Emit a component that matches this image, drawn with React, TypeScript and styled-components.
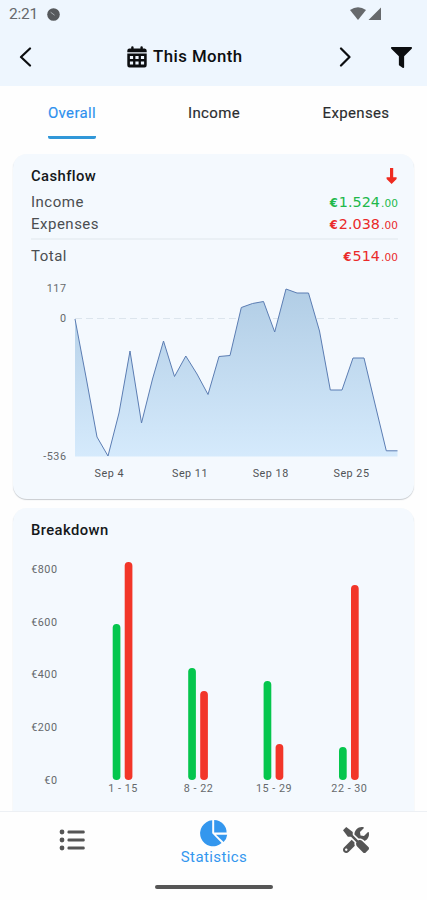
import React from "react";
import styled, { createGlobalStyle } from "styled-components";
import { FaFilter, FaTools } from "react-icons/fa";

const GlobalStyle = createGlobalStyle`
  * { box-sizing: border-box; }
  body { margin: 0; background: #fff; font-family: Roboto, "Liberation Sans", sans-serif; }
`;

const Screen = styled.div`
  width: 427px;
  height: 900px;
  display: flex;
  flex-direction: column;
  overflow: hidden;
  background: #fefefe;
`;

const Header = styled.header`
  height: 86px;
  flex: none;
  background: #eef6fe;
`;

const StatusBar = styled.div`
  height: 28px;
  display: flex;
  align-items: center;
  padding: 0 45px 0 9px;
  color: #66696c;
  font-size: 15.5px;
  letter-spacing: -0.2px;
  svg { display: block; }
`;

const StatusDot = styled.svg`
  margin-left: 9px;
`;

const StatusIcons = styled.div`
  margin-left: auto;
  display: flex;
  gap: 2px;
`;

const PeriodBar = styled.div`
  height: 58px;
  display: grid;
  grid-template-columns: 50px 1fr 50px 57px;
  align-items: center;
  color: #0c0e10;
  svg { display: block; }
`;

const Back = styled.div`
  padding-left: 19px;
`;
const Forward = styled.div`
  padding-left: 19px;
`;
const Filter = styled.div`
  padding-left: 21px;
`;

const Period = styled.div`
  display: flex;
  align-items: center;
  padding-left: 77px;
  gap: 6px;
  font-size: 16.8px;
  line-height: 20px;
  font-weight: 500;
  letter-spacing: 0.45px;
  white-space: nowrap;
`;

const PeriodLabel = styled.span`
  padding-bottom: 2px;
`;

const Tabs = styled.nav`
  height: 68px;
  flex: none;
  display: grid;
  grid-template-columns: repeat(3, 1fr);
  justify-items: center;
  align-items: start;
  padding-left: 1px;
`;

const Tab = styled.div<{ $active?: boolean }>`
  height: 53px;
  padding-top: 17px;
  font-size: 15px;
  line-height: 20px;
  letter-spacing: 0.35px;
  color: ${(p) => (p.$active ? "#2e90ee" : "#2b2d2f")};
  -webkit-text-stroke: 0.15px currentColor;
  border-bottom: 3px solid ${(p) => (p.$active ? "#3097d8" : "transparent")};
  border-radius: 2px;
`;

const Content = styled.main`
  flex: 1;
  min-height: 0;
  overflow: hidden;
  padding: 0 13px;
  display: flex;
  flex-direction: column;
  gap: 9px;
`;

const Card = styled.section<{ $height: number }>`
  flex: none;
  height: ${(p) => p.$height}px;
  border-radius: 14px;
  background: #f4f9fe;
  box-shadow: 0 1px 1px rgba(60, 75, 90, 0.28);
  padding: 11px 16px 0 18px;
`;

const CardTitle = styled.div`
  display: flex;
  justify-content: space-between;
  height: 22px;
  align-items: center;
  font-size: 14.8px;
  font-weight: 500;
  letter-spacing: 0.42px;
  color: #15181a;
`;

const Rows = styled.div`
  padding-top: 4px;
`;

const Row = styled.div<{ $total?: boolean }>`
  height: ${(p) => (p.$total ? 34 : 22)}px;
  ${(p) => (p.$total ? "border-top: 2px solid #eaf0f5; margin-top: 3px;" : "")}
  display: flex;
  align-items: center;
  justify-content: space-between;
  font-size: 15px;
  letter-spacing: 0.5px;
  color: #4b4e51;
`;

const Amount = styled.div<{ $positive?: boolean }>`
  color: ${(p) => (p.$positive ? "#20b84a" : "#ea2a2a")};
  font-family: "DejaVu Sans", sans-serif;
  font-size: 14.4px;
  letter-spacing: 0;
  white-space: nowrap;
`;

const Minor = styled.span`
  font-size: 10.5px;
  letter-spacing: 0.1px;
  margin-left: 1px;
`;
const Currency = styled.span`
  font-size: 11.5px;
  font-weight: 700;
  margin-right: 1px;
`;

const Chart = styled.svg`
  display: block;
  margin-left: -18px;
  font-family: Roboto, sans-serif;
  font-size: 10.8px;
  letter-spacing: 0.5px;
  fill: #66696c;
`;

const BottomNav = styled.nav`
  flex: none;
  height: 89px;
  border-top: 1px solid #edf0f4;
  background: #fefefe;
`;

const NavItems = styled.div`
  height: 67px;
  display: grid;
  grid-template-columns: 1fr 1fr 1fr;
  justify-items: center;
  color: #555;
  padding-left: 1px;
  svg { display: block; }
`;

const NavItem = styled.div<{ $active?: boolean }>`
  display: flex;
  flex-direction: column;
  align-items: center;
  padding-top: ${(p) => (p.$active ? 7 : 15)}px;
  color: ${(p) => (p.$active ? "#3497ee" : "#555")};
  font-size: 15px;
  line-height: 20px;
  letter-spacing: 0.4px;
`;

const HomeBar = styled.div`
  width: 118px;
  height: 4px;
  margin: 6px auto 0;
  border-radius: 2px;
  background: #565656;
`;

const CASHFLOW: [number, number][] = [
  [75, 319], [86, 377], [97, 437], [108, 456], [119, 413], [130, 351],
  [141.5, 423], [152.5, 379], [163.5, 341], [174.5, 376.5], [185.8, 356],
  [197, 374], [208, 394.5], [219, 356.5], [230, 355.5], [241.3, 307.5],
  [252.5, 303.5], [263.5, 301.5], [274.7, 332], [286, 289], [297, 293],
  [308.5, 293], [319.5, 331], [330.3, 390], [342, 390], [353, 358],
  [364, 358], [375, 404], [386.3, 450.8], [397.5, 450.8],
];
const LINE = CASHFLOW.map((p) => p.join(",")).join(" ");

const GROUPS = [
  { label: "1 - 15", x: 122.7, income: 624, expense: 562 },
  { label: "8 - 22", x: 198.2, income: 668, expense: 691 },
  { label: "15 - 29", x: 273.6, income: 681, expense: 744 },
  { label: "22 - 30", x: 349, income: 747, expense: 585 },
];

const CalendarIcon = () => (
  <svg width="20" height="22" viewBox="0 0 20 22" fill="currentColor">
    <path fillRule="evenodd" d="M4.2 1.2q0-1 1.2-1t1.2 1V2.500h6.800V1.200q0-1 1.200-1t1.200 1V2.500h1.900A2.200 2.200 0 0 1 19.700 4.700v1.600H.3V4.700A2.200 2.200 0 0 1 2.500 2.500h1.700zM.3 7.600h19.400v11.600a2.200 2.200 0 0 1-2.200 2.200H2.500a2.200 2.200 0 0 1-2.200-2.200zM2.900 10v3h3.200v-3zm5.500 0v3h3.200v-3zm5.500 0v3h3.200v-3zM2.900 15.600v3h3.200v-3zm5.500 0v3h3.200v-3zm5.500 0v3h3.200v-3z" />
  </svg>
);

const PieIcon = () => (
  <svg width="28" height="28" viewBox="0 0 28 28" fill="currentColor">
    <path d="M12.200 1.300V14.300L21.600 24.100A13 13 0 1 1 12.200 1.300z" />
    <path d="M14.200 1A12.600 12.600 0 0 1 26.600 13.600H14.200z" />
    <path d="M16 15.700H27.200A13 13 0 0 1 23.600 23.100z" />
  </svg>
);

const Chevron = ({ right = false }: { right?: boolean }) => (
  <svg width="13" height="20" viewBox="0 0 13 20" fill="none" stroke="currentColor" strokeWidth="2.2" strokeLinecap="round" strokeLinejoin="round">
    <path d={right ? "M2 1.500 10.500 10 2 18.500" : "M11 1.500 2 10l9 8.500"} />
  </svg>
);

export default function App() {
  return (
    <Screen>
      <GlobalStyle />
      <Header>
        <StatusBar>
          2:21
          <StatusDot width="13" height="13" viewBox="0 0 13 13">
            <circle cx="6.5" cy="6.5" r="6.3" fill="#56595c" />
            <path d="m3.600 4.200 4 3" stroke="#a6abaf" strokeWidth="1" />
          </StatusDot>
          <StatusIcons>
            <svg width="16" height="14" viewBox="0 0 16 14"><path d="M0 3Q8-2.300 16 3L8 13z" fill="#66696c" /></svg>
            <svg width="14" height="14" viewBox="0 0 14 14"><path d="M13 .5V13H.5z" fill="#66696c" /></svg>
          </StatusIcons>
        </StatusBar>
        <PeriodBar>
          <Back><Chevron /></Back>
          <Period><CalendarIcon /><PeriodLabel>This Month</PeriodLabel></Period>
          <Forward><Chevron right /></Forward>
          <Filter><FaFilter size={21} /></Filter>
        </PeriodBar>
      </Header>

      <Tabs>
        <Tab $active>Overall</Tab>
        <Tab>Income</Tab>
        <Tab>Expenses</Tab>
      </Tabs>

      <Content>
        <Card $height={345}>
          <CardTitle>
            Cashflow
            <svg width="13" height="18" viewBox="0 0 13 18">
              <path d="M5 1h3.200v9.200h3.400v1.800L6.600 17 1.600 12v-1.800H5z" fill="#ef2b20" />
            </svg>
          </CardTitle>
          <Rows>
            <Row>Income<Amount $positive><Currency>€</Currency>1.524<Minor>.00</Minor></Amount></Row>
            <Row>Expenses<Amount><Currency>€</Currency>2.038<Minor>.00</Minor></Amount></Row>
            <Row $total>Total<Amount><Currency>€</Currency>514<Minor>.00</Minor></Amount></Row>
          </Rows>
          <Chart width="401" height="210" viewBox="13 272 401 210">
            <defs>
              <linearGradient id="area" x1="0" y1="0" x2="0" y2="1">
                <stop offset="0" stopColor="#b1cde5" />
                <stop offset="1" stopColor="#d5eafc" />
              </linearGradient>
            </defs>
            <path d="M75 318.500H398" stroke="#dce5ed" strokeDasharray="7 4" />
            <polygon points={`75,456.5 ${LINE} 397.5,456.5`} fill="url(#area)" />
            <polyline points={LINE} fill="none" stroke="#5b7db3" strokeWidth="1" />
            <g textAnchor="end">
              <text x="66.5" y="292">117</text>
              <text x="66.5" y="322">0</text>
              <text x="66.5" y="459.5">-536</text>
            </g>
            <g textAnchor="middle" fill="#505356">
              <text x="109.3" y="477">Sep 4</text>
              <text x="190" y="477">Sep 11</text>
              <text x="270.7" y="477">Sep 18</text>
              <text x="351.5" y="477">Sep 25</text>
            </g>
          </Chart>
        </Card>

        <Card $height={330}>
          <CardTitle>Breakdown</CardTitle>
          <Chart width="401" height="270" viewBox="13 541 401 270">
            <g textAnchor="end">
              <text x="57.5" y="572.5">€800</text>
              <text x="57.5" y="625.5">€600</text>
              <text x="57.5" y="678">€400</text>
              <text x="57.5" y="731">€200</text>
              <text x="57.5" y="784">€0</text>
            </g>
            {GROUPS.map((g) => (
              <g key={g.label} textAnchor="middle">
                <rect x={g.x - 10} y={g.income} width="7.7" height={780 - g.income} rx="3.8" fill="#05c64d" />
                <rect x={g.x + 2} y={g.expense} width="7.7" height={780 - g.expense} rx="3.8" fill="#f23629" />
                <text x={g.x + 0.4} y="792">{g.label}</text>
              </g>
            ))}
          </Chart>
        </Card>
      </Content>

      <BottomNav>
        <NavItems>
          <NavItem>
            <svg width="26" height="26" viewBox="0 0 26 26" fill="currentColor">
              {[5, 13, 21].map((y) => (
                <g key={y}>
                  <circle cx="3" cy={y} r="2.4" />
                  <rect x="8.5" y={y - 1.4} width="17.2" height="2.8" rx="1.2" />
                </g>
              ))}
            </svg>
          </NavItem>
          <NavItem $active><PieIcon />Statistics</NavItem>
          <NavItem><FaTools size={26} /></NavItem>
        </NavItems>
        <HomeBar />
      </BottomNav>
    </Screen>
  );
}
